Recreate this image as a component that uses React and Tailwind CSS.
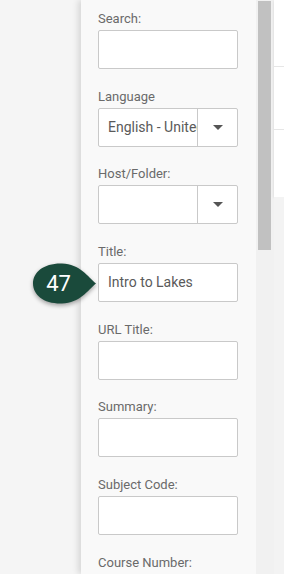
import React from "react";

const fields = [
  { label: "Search:", type: "text" },
  { label: "Language", type: "select", value: "English - United States" },
  { label: "Host/Folder:", type: "select", value: "" },
  { label: "Title:", type: "text", value: "Intro to Lakes" },
  { label: "URL Title:", type: "text" },
  { label: "Summary:", type: "text" },
  { label: "Subject Code:", type: "text" },
  { label: "Course Number:", type: "text" },
];

const Field = ({ field }) => {
  return (
    <div className="mb-[19.7px]">
      <div className="h-4 leading-4 text-[13px] text-[#6a6a6a] mb-[3px]">{field.label}</div>
      {field.type === "select" ? (
        <div className="flex h-[39px] w-[140px] bg-white border border-[#c9c9c9] rounded-[2px]">
          <div className="flex-1 overflow-hidden whitespace-nowrap pl-[9px] leading-[37px] text-[14px] text-[#5a5a5a]">
            {field.value}
          </div>
          <div className="w-[40px] border-l border-[#c9c9c9] flex items-center justify-center">
            {/* caret */}
            <svg width="10" height="5" viewBox="0 0 10 5">
              <path d="M0 0 L10 0 L5 5 Z" fill="#555" />
            </svg>
          </div>
        </div>
      ) : (
        <div className="h-[39px] w-[140px] bg-white border border-[#c9c9c9] rounded-[2px] pl-[9px] leading-[37px] text-[14px] text-[#5a5a5a]">
          {field.value}
        </div>
      )}
    </div>
  );
};

const App = () => {
  return (
    <div
      className="relative flex w-[284px] h-[574px] overflow-hidden bg-[#f5f5f5]"
      style={{ fontFamily: "Roboto, 'Liberation Sans', sans-serif" }}
    >
      <div className="w-[81px] shrink-0" />

      {/* form panel */}
      <div className="w-[175px] shrink-0 bg-[#f9f9f9] pl-[17px] pt-[11px] shadow-[-3px_0_6px_rgba(0,0,0,0.12)]">
        {fields.map((field) => (
          <Field key={field.label} field={field} />
        ))}
      </div>

      {/* scrollbar */}
      <div className="w-[18px] shrink-0 bg-[#f1f1f1] pl-[2px] pt-[1px]">
        <div className="w-[13px] h-[249px] bg-[#c1c1c1]" />
      </div>

      {/* page behind */}
      <div className="flex-1 flex flex-col">
        <div className="h-[197px] bg-white flex flex-col shadow-[0_1px_3px_rgba(0,0,0,0.12)]">
          <div className="h-[67px] border-b border-[#e6e6e6]" />
          <div className="h-[63px] border-b border-[#e6e6e6]" />
        </div>
        <div className="flex-1 bg-[#f3f3f3]" />
      </div>

      {/* step callout */}
      <div className="absolute left-[33px] top-[263px] w-[64px] h-[41px]">
        <svg width="64" height="41" viewBox="0 0 64 41" className="absolute inset-0 drop-shadow-[0_2px_2px_rgba(0,0,0,0.35)]">
          <path
            d="M63 20.5 C55 14 47 1 29 0.5 C11 0 0 9 0 20.5 C0 32 11 41 29 40.5 C47 40 55 27 63 20.5 Z"
            fill="#1a4a3b"
          />
        </svg>
        <div className="absolute left-0 top-0 w-[50px] h-[41px] flex items-center justify-center text-white text-[22px] leading-none pl-[1px]">
          47
        </div>
      </div>
    </div>
  );
};

export default App;
